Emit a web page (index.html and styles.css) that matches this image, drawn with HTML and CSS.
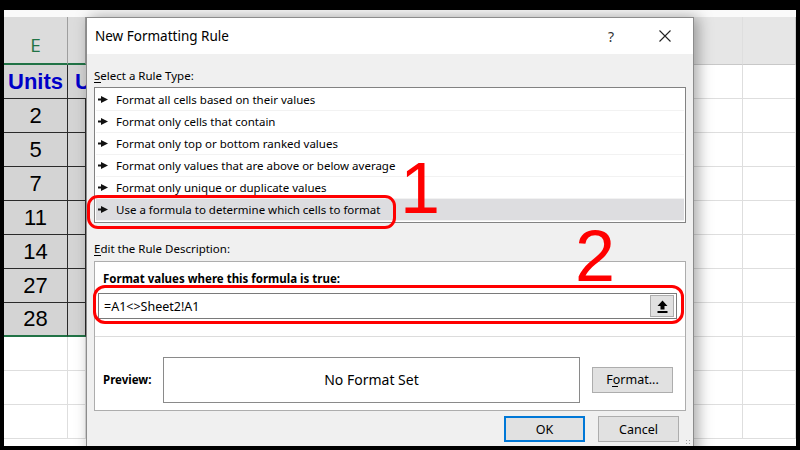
FILE: index.html
```html
<!DOCTYPE html>
<html lang="en">
<head>
  <meta charset="UTF-8">
  <title>New Formatting Rule</title>
  <link rel="stylesheet" href="styles.css">
</head>
<body>
  <div class="screen">
    <div class="sheet">
      <div class="topband"></div>
      <div class="grid">
        <div class="hd sel">E</div>
        <div class="hd sel"></div>
        <div class="hd fill"></div>
        <div class="hd"></div>

        <div class="c data units">Units</div>
        <div class="c data units cut">U</div>
        <div class="c fill"></div>
        <div class="c"></div>

        <div class="c data">2</div><div class="c data"></div><div class="c fill"></div><div class="c"></div>
        <div class="c data">5</div><div class="c data"></div><div class="c fill"></div><div class="c"></div>
        <div class="c data">7</div><div class="c data"></div><div class="c fill"></div><div class="c"></div>
        <div class="c data">11</div><div class="c data"></div><div class="c fill"></div><div class="c"></div>
        <div class="c data">14</div><div class="c data"></div><div class="c fill"></div><div class="c"></div>
        <div class="c data">27</div><div class="c data"></div><div class="c fill"></div><div class="c"></div>
        <div class="c data last">28</div><div class="c data last"></div><div class="c fill"></div><div class="c"></div>

        <div class="c"></div><div class="c"></div><div class="c fill"></div><div class="c"></div>
        <div class="c"></div><div class="c"></div><div class="c fill"></div><div class="c"></div>
        <div class="c"></div><div class="c"></div><div class="c fill"></div><div class="c"></div>
      </div>

      <div class="dialog">
        <div class="titlebar">
          <span class="title">New Formatting Rule</span>
          <span class="help">?</span>
          <svg class="close" width="12" height="12" viewBox="0 0 12 12"><path d="M0.5 0.5L11.5 11.5M11.5 0.5L0.5 11.5" stroke="#222" stroke-width="1.1" fill="none"/></svg>
        </div>
        <div class="body">
          <div class="label">Select a Rule Type:</div>
          <ul class="rules">
            <li><svg class="tri" width="10" height="7" viewBox="0 0 10 7"><rect x="0" y="2.5" width="4" height="2"/><polygon points="3,0 10,3.5 3,7"/></svg>Format all cells based on their values</li>
            <li><svg class="tri" width="10" height="7" viewBox="0 0 10 7"><rect x="0" y="2.5" width="4" height="2"/><polygon points="3,0 10,3.5 3,7"/></svg>Format only cells that contain</li>
            <li><svg class="tri" width="10" height="7" viewBox="0 0 10 7"><rect x="0" y="2.5" width="4" height="2"/><polygon points="3,0 10,3.5 3,7"/></svg>Format only top or bottom ranked values</li>
            <li><svg class="tri" width="10" height="7" viewBox="0 0 10 7"><rect x="0" y="2.5" width="4" height="2"/><polygon points="3,0 10,3.5 3,7"/></svg>Format only values that are above or below average</li>
            <li><svg class="tri" width="10" height="7" viewBox="0 0 10 7"><rect x="0" y="2.5" width="4" height="2"/><polygon points="3,0 10,3.5 3,7"/></svg>Format only unique or duplicate values</li>
            <li class="active"><svg class="tri" width="10" height="7" viewBox="0 0 10 7"><rect x="0" y="2.5" width="4" height="2"/><polygon points="3,0 10,3.5 3,7"/></svg>Use a formula to determine which cells to format</li>
          </ul>
          <div class="label desc">Edit the Rule Description:</div>
          <div class="group">
            <div class="formula">
              <div class="heading">Format values where this formula is true:</div>
              <div class="input">
                <span>=A1&lt;&gt;Sheet2!A1</span>
                <span class="pick">
                  <svg width="11" height="13" viewBox="0 0 11 13"><path d="M5.5 0.5L0.5 6H3.5V9.5H7.5V6H10.5Z" fill="#000"/><rect x="0.5" y="11" width="10" height="2" fill="#000"/></svg>
                </span>
              </div>
            </div>
            <div class="preview">
              <span class="plabel">Preview:</span>
              <div class="pbox">No Format Set</div>
              <div class="btn fmt">Format...</div>
            </div>
          </div>
          <div class="actions">
            <div class="btn ok">OK</div>
            <div class="btn">Cancel</div>
          </div>
        </div>
        <div class="grip"></div>
      </div>

      <div class="mark box1"></div>
      <div class="mark box2"></div>
      <div class="num n1">1</div>
      <div class="num n2">2</div>
    </div>
  </div>
</body>
</html>
```

FILE: styles.css
```css
* {
  padding: 0;
  margin: 0;
  box-sizing: border-box;
}
body {
  background-color: #000;
}
.screen {
  width: 800px;
  height: 450px;
  padding: 10px 4px 4px 4px;
  background-color: #000;
}
.sheet {
  position: relative;
  width: 792px;
  height: 436px;
  background-color: #fff;
  overflow: hidden;
  font-family: "Liberation Sans", Arial, sans-serif;
}
.topband {
  height: 7px;
  background-color: #fafafa;
}
.grid {
  display: grid;
  grid-template-columns: 64px 18px 657px 1fr;
  grid-template-rows: 48px repeat(11, 34px);
}
.hd {
  background-color: #e6e6e6;
  border-right: 1px solid #c8c8c8;
  border-bottom: 1px solid #c8c8c8;
  display: flex;
  align-items: flex-end;
  justify-content: center;
  padding-bottom: 5px;
  font-family: "Open Sans", sans-serif;
  font-size: 19px;
  color: #217346;
}
.hd.sel {
  background-color: #dcdcdc;
  border-bottom: 2px solid #217346;
  border-right-color: #9e9e9e;
}
.c {
  border-right: 1px solid #dedede;
  border-bottom: 1px solid #dedede;
  display: flex;
  align-items: center;
  justify-content: center;
  font-size: 22px;
  color: #000;
}
.fill {
  border-right: 1px solid #dedede;
}
.c.data {
  background-color: #d4d4d4;
  border-right: 1px solid #2a2a2a;
  border-bottom: 1px solid #2a2a2a;
}
.c.last {
  border-bottom: 2px solid #217346;
}
.units {
  font-weight: bold;
  color: #0000c8;
}
.c.cut {
  justify-content: flex-start;
  padding-left: 7px;
  border-right: none;
}

/* dialog */
.dialog {
  position: absolute;
  left: 82px;
  top: 7px;
  width: 608px;
  height: 440px;
  border: 1px solid #8c8c8c;
  background-color: #f0f0f0;
  box-shadow: 4px 0 14px rgba(0, 0, 0, 0.35);
  font-family: "Noto Sans", "Open Sans", sans-serif;
  font-size: 11.5px;
  color: #000;
}
.titlebar {
  height: 36px;
  background-color: #fff;
  display: flex;
  align-items: center;
  padding-left: 8px;
}
.title {
  font-size: 13.5px;
  flex: 1;
}
.help {
  font-size: 14px;
  color: #333;
  margin-right: 45px;
}
.close {
  margin-right: 22px;
}
.body {
  padding: 0 7px;
}
/* access key underline on the first letter */
.label {
  height: 16px;
  line-height: 16px;
  margin-top: 14px;
  background: linear-gradient(#000, #000) no-repeat 0 14px / 7px 1px;
}
.label.desc {
  margin-top: 18px;
}
.rules {
  list-style: none;
  margin-top: 3px;
  width: 592px;
  height: 136px;
  background-color: #fff;
  border: 1px solid #828282;
  padding: 1px;
}
.rules li {
  height: 22px;
  display: flex;
  align-items: center;
  padding-left: 2px;
  border-bottom: 1px solid #f2f2f2;
}
.rules li.active {
  background-color: #dddde0;
}
.tri {
  margin-right: 8px;
  fill: #111;
}
.group {
  margin-top: 4px;
  width: 592px;
  height: 150px;
  background-color: #fff;
  border: 1px solid #adadad;
}
.formula {
  height: 75px;
  border-bottom: 1px solid #dcdcdc;
  padding: 9px 8px 0 3px;
}
.heading {
  font-weight: bold;
  margin-left: 5px;
  height: 22px;
  line-height: 16px;
  background: linear-gradient(#000, #000) no-repeat 8px 14px / 7px 1px;
}
.input {
  height: 26px;
  border: 1px solid #7a7a7a;
  display: flex;
  align-items: center;
  justify-content: space-between;
  padding-left: 5px;
  padding-right: 2px;
  font-size: 12.5px;
}
.pick {
  width: 24px;
  height: 22px;
  background-color: #e1e1e1;
  border: 1px solid #adadad;
  display: flex;
  align-items: center;
  justify-content: center;
}
.preview {
  height: 73px;
  display: flex;
  align-items: center;
  padding: 19px 0 7px 8px;
}
.plabel {
  font-weight: bold;
  width: 60px;
}
.pbox {
  width: 417px;
  height: 46px;
  border: 1px solid #8a8a8a;
  display: flex;
  align-items: center;
  justify-content: center;
  font-size: 14px;
}
.btn {
  width: 81px;
  height: 26px;
  background-color: #e1e1e1;
  border: 1px solid #adadad;
  display: flex;
  align-items: center;
  justify-content: center;
  font-size: 12.5px;
}
.fmt {
  margin-left: 12px;
  background: #e1e1e1 linear-gradient(#000, #000) no-repeat 19px 18px / 6px 1px;
}
.actions {
  display: flex;
  justify-content: flex-end;
  gap: 13px;
  margin-top: 5px;
  padding-right: 7px;
}
.btn.ok {
  border: 2px solid #0078d7;
}
.grip {
  position: absolute;
  left: 598px;
  top: 421px;
  width: 6px;
  height: 6px;
  background-image: radial-gradient(#a0a0a0 0.8px, transparent 1px);
  background-size: 3px 3px;
}

/* annotations */
.mark {
  position: absolute;
  border: 3px solid #ff0000;
  border-radius: 11px;
}
.box1 {
  left: 83px;
  top: 185px;
  width: 309px;
  height: 34px;
}
.box2 {
  left: 89px;
  top: 275px;
  width: 591px;
  height: 39px;
  border-radius: 12px;
}
.num {
  position: absolute;
  font-family: "Liberation Sans", Arial, sans-serif;
  font-size: 72px;
  line-height: 1;
  color: #ff0000;
}
.n1 {
  left: 396px;
  top: 142px;
}
.n2 {
  left: 571px;
  top: 210px;
}
```
